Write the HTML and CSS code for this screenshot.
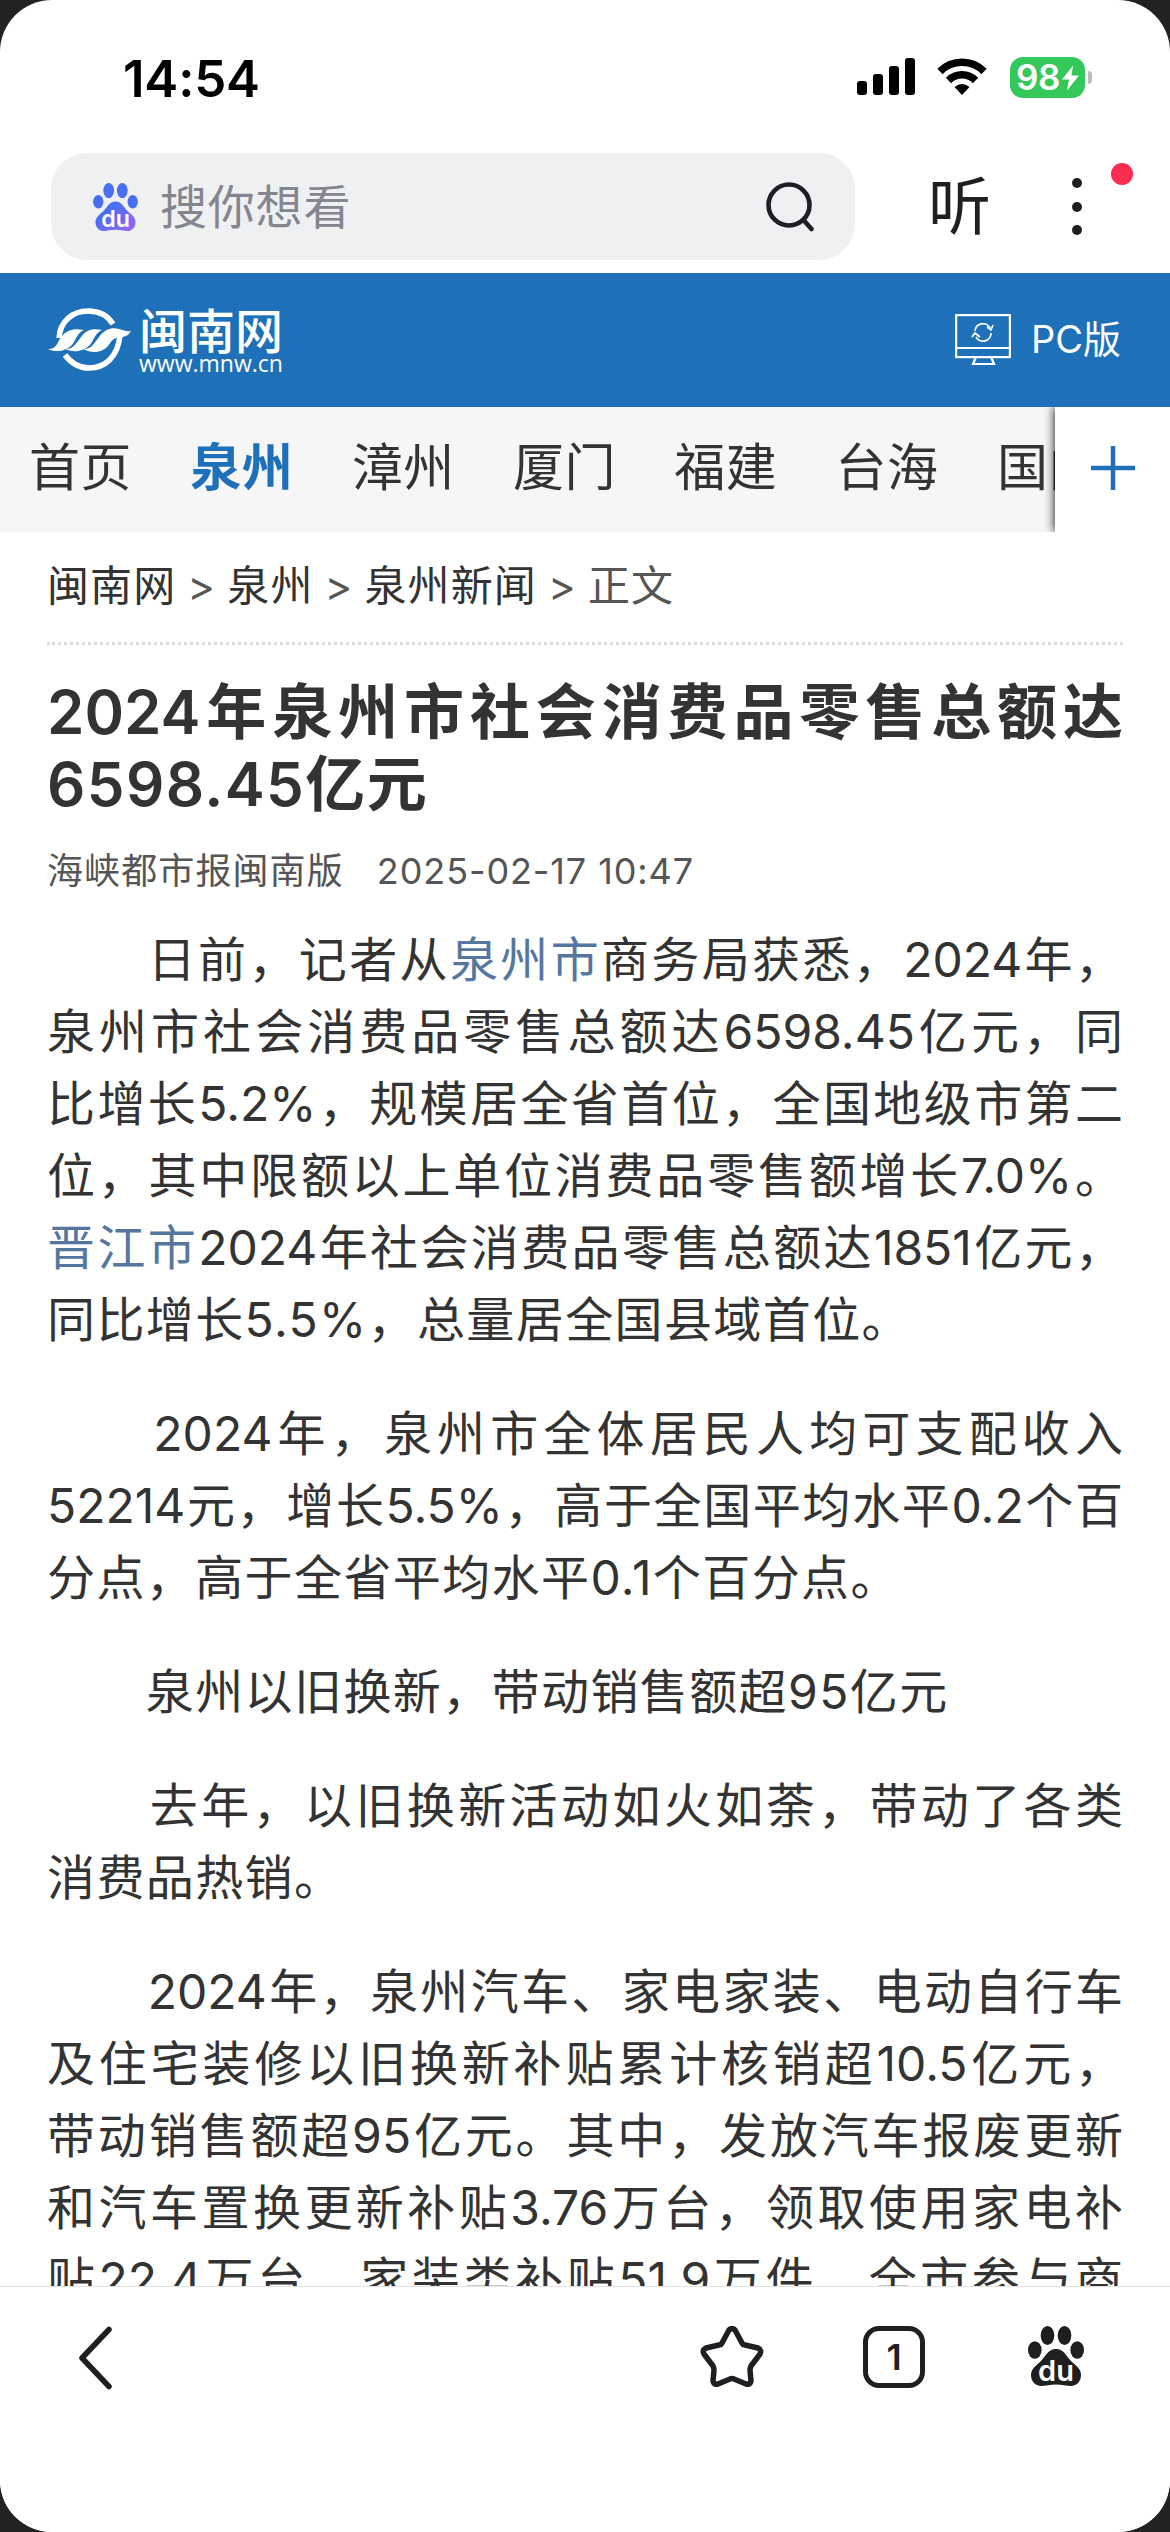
FILE: index.html
```html
<!DOCTYPE html>
<html lang="zh-CN">
<head>
  <meta charset="UTF-8" />
  <meta name="viewport" content="width=device-width, initial-scale=1.0"/>
  <title>2024年泉州市社会消费品零售总额达6598.45亿元</title>
  <link rel="stylesheet" href="styles.css">
</head>
<body>
  <div class="screen">
    <div class="statusBar">
      <span class="time">14:54</span>
      <div class="statusIcons">
        <svg width="58" height="43" viewBox="0 0 58 43">
          <rect x="0" y="23" width="10" height="14" rx="3"/>
          <rect x="16" y="16" width="10" height="21" rx="3"/>
          <rect x="32" y="8" width="10" height="29" rx="3"/>
          <rect x="48" y="0" width="10" height="37" rx="3"/>
        </svg>
        <svg class="wifi" width="50" height="43" viewBox="0 0 50 43">
          <path d="M3 13.5a31 31 0 0 1 44 0" fill="none" stroke="#000" stroke-width="7.5"/>
          <path d="M11.5 22.5a19 19 0 0 1 27 0" fill="none" stroke="#000" stroke-width="7.5"/>
          <path d="M25 37l-7.5-8q7.500-6 15 0z"/>
        </svg>
        <div class="battery">
          <span>98</span>
          <svg width="17" height="28" viewBox="0 0 17 25"><path d="M11 0L0 14h7L5 25 17 10H9.500z" fill="#fff"/></svg>
        </div>
        <i class="batteryTip"></i>
      </div>
    </div>

    <div class="searchRow">
      <div class="searchBox">
        <svg width="45" height="48" viewBox="0 0 56 60">
          <defs>
            <linearGradient id="pawBlue" x1="0" y1="0" x2="1" y2="1">
              <stop offset="0.3" stop-color="#4a6ef5"/>
              <stop offset="1" stop-color="#a066f5"/>
            </linearGradient>
          </defs>
          <g fill="#4a6ef2">
            <ellipse cx="6.500" cy="23.500" rx="6.500" ry="8.500"/>
            <ellipse cx="19.500" cy="9.500" rx="6.700" ry="9.500"/>
            <ellipse cx="36.500" cy="9.500" rx="6.700" ry="9.500"/>
            <ellipse cx="49.500" cy="23.500" rx="6.500" ry="8.500"/>
          </g>
          <path d="M28 23c8 0 10 7 16 13 6 5 9 8 9 13 0 7-5 11-10 11-5 0-9-1.500-15-1.500S18 60 13 60C8 60 3 56 3 49c0-5 3-8 9-13 6-6 8-13 16-13z" fill="url(#pawBlue)"/>
          <text class="du" x="28" y="54.500" text-anchor="middle">du</text>
        </svg>
        <span class="placeholder">搜你想看</span>
        <svg width="50" height="50" viewBox="0 0 50 50" fill="none" stroke="#1f1f23" stroke-width="4.600" stroke-linecap="round">
          <circle cx="24" cy="23" r="20.500"/>
          <path d="M38.500 38l8 9"/>
        </svg>
      </div>
      <span class="listen">听</span>
      <div class="more"><i></i><i></i><i></i><b></b></div>
    </div>

    <header class="siteHeader">
      <div class="logo">
        <svg width="84" height="64" viewBox="0 0 84 64" fill="none" stroke="#fff">
          <path d="M11 30C12 13 25 3 40 3c11 0 20 5 25 13" stroke-width="5.500"/>
          <path d="M17 47c6 8 13 13 24 13 16 0 29-11 31-33" stroke-width="5.500"/>
          <path d="M0 41c10 0 9-8 14-13 5-6 12-8 22-6-7 3-8 10-12 15-6 6-16 8-24 4z" fill="#fff" stroke="none"/>
          <path d="M16 40c8 3 11-3 17-11 5-7 11-9 21-7-7 3-8 10-12 15-6 6-17 9-26 3z" fill="#fff" stroke="none"/>
          <path d="M34 40c8 3 11-3 17-11 6-8 13-10 20-8 5 1 7 3 12 2-4 8-12 5-17 8-4 3-4 5-7 8-6 6-17 7-25 1z" fill="#fff" stroke="none"/>
        </svg>
        <div class="logoText">
          <strong>闽南网</strong>
          <span>www.mnw.cn</span>
        </div>
      </div>
      <div class="pcLink">
        <svg width="56" height="52" viewBox="0 0 56 52" fill="none" stroke="#fff" stroke-width="2.200">
          <rect x="1.100" y="1.100" width="53.800" height="42"/>
          <path d="M1 34h54M21 43l-3 7h21l-3-7"/>
          <path d="M20 17a8 8 0 0 1 15-3m1 5a8 8 0 0 1-15 4M32 13l4 3 2-5M17 23l3-4 5 4" stroke-width="1.700"/>
        </svg>
        <span>PC版</span>
      </div>
    </header>

    <nav class="channels">
      <div class="channelList">
        <a>首页</a>
        <a class="active">泉州</a>
        <a>漳州</a>
        <a>厦门</a>
        <a>福建</a>
        <a>台海</a>
        <a>国内</a>
      </div>
      <div class="addChannel">
        <svg width="46" height="46" viewBox="0 0 46 46" stroke="#1e71b8" stroke-width="4.500"><path d="M23 1v44M1 23h44"/></svg>
      </div>
    </nav>

    <main class="article">
      <div class="crumbs"><a>闽南网</a><i>&gt;</i><a>泉州</a><i>&gt;</i><a>泉州新闻</a><i>&gt;</i><span>正文</span></div>
      <h1><span class="line">2024年泉州市社会消费品零售总额达</span>6598.45亿元</h1>
      <div class="meta"><span>海峡都市报闽南版</span><time>2025-02-17 10:47</time></div>
      <p>
        <span class="line">　　日前，记者从<a>泉州市</a>商务局获悉，2024年，</span>
        <span class="line">泉州市社会消费品零售总额达6598.45亿元，同</span>
        <span class="line">比增长5.2%，规模居全省首位，全国地级市第二</span>
        <span class="line">位，其中限额以上单位消费品零售额增长7.0%。</span>
        <span class="line"><a>晋江市</a>2024年社会消费品零售总额达1851亿元，</span>
        同比增长5.5%，总量居全国县域首位。
      </p>
      <p>
        <span class="line">　　2024年，泉州市全体居民人均可支配收入</span>
        <span class="line">52214元，增长5.5%，高于全国平均水平0.2个百</span>
        分点，高于全省平均水平0.1个百分点。
      </p>
      <p>　　泉州以旧换新，带动销售额超95亿元</p>
      <p>
        <span class="line">　　去年，以旧换新活动如火如荼，带动了各类</span>
        消费品热销。
      </p>
      <p>
        <span class="line">　　2024年，泉州汽车、家电家装、电动自行车</span>
        <span class="line">及住宅装修以旧换新补贴累计核销超10.5亿元，</span>
        <span class="line">带动销售额超95亿元。其中，发放汽车报废更新</span>
        <span class="line">和汽车置换更新补贴3.76万台，领取使用家电补</span>
        <span class="line">贴22.4万台、家装类补贴51.9万件，全市参与商</span>
      </p>
    </main>

    <footer class="toolbar">
      <svg width="34" height="64" viewBox="0 0 34 64" fill="none" stroke="#1f1f23" stroke-width="5.500" stroke-linecap="round" stroke-linejoin="round">
        <path d="M31 3.500L4 32l27 28.500"/>
      </svg>
      <svg class="star" width="64" height="62" viewBox="0 0 64 62" fill="none" stroke="#1f1f23" stroke-width="5.500" stroke-linejoin="round">
        <path d="M29 4q3-3 6 0l7 13q1 2 3 2l13 3q4 2 2 6l-9 12q-1 2-1 4l1 11q-1 4-5 3l-12-5q-2-1-4 0l-12 5q-4 1-5-3l1-11q0-2-1-4L4 28q-2-4 2-6l13-3q2 0 3-2z"/>
      </svg>
      <div class="tabs">1</div>
      <svg width="56" height="60" viewBox="0 0 56 60">
        <g fill="#1f1f1f">
          <ellipse cx="6.800" cy="24" rx="6.800" ry="8.800"/>
          <ellipse cx="19.500" cy="9.500" rx="6.800" ry="9.500"/>
          <ellipse cx="36.500" cy="9.500" rx="6.800" ry="9.500"/>
          <ellipse cx="49.200" cy="24" rx="6.800" ry="8.800"/>
          <path d="M28 23c8 0 10 7 16 13 6 5 9 8 9 13 0 7-5 11-10 11-5 0-9-1.500-15-1.500S18 60 13 60C8 60 3 56 3 49c0-5 3-8 9-13 6-6 8-13 16-13z"/>
        </g>
        <text class="du" x="28" y="54.500" text-anchor="middle">du</text>
      </svg>
    </footer>
  </div>
</body>
</html>
```
FILE: styles.css
```css
* {
  margin: 0;
  padding: 0;
  box-sizing: border-box;
}

body {
  background: #222;
  font-family: Inter, "Noto Sans CJK SC", sans-serif;
  color: #333;
}

i {
  font-style: normal;
}

svg {
  display: block;
  flex-shrink: 0;
}

.screen {
  width: 1170px;
  height: 2532px;
  background: #fff;
  border-radius: 52px;
  overflow: hidden;
  display: flex;
  flex-direction: column;
}

.statusBar {
  height: 153px;
  padding: 57px 78px 0 123px;
  display: flex;
  justify-content: space-between;
  align-items: flex-start;
  flex-shrink: 0;
}

.time {
  font-size: 51px;
  font-weight: 600;
  line-height: 43px;
  color: #000;
  letter-spacing: -0.2px;
}

.statusIcons {
  display: flex;
  align-items: center;
  height: 41px;
}

.statusIcons > svg {
  margin-top: 4px;
}

.statusIcons .wifi {
  margin-left: 22px;
}

.battery {
  width: 75px;
  height: 41px;
  margin-left: 23px;
  border-radius: 13px;
  background: #34c759;
  color: #fff;
  font-size: 35px;
  font-weight: 600;
  line-height: 41px;
  display: flex;
  align-items: center;
  justify-content: center;
  gap: 2px;
  letter-spacing: -0.5px;
}

.batteryTip {
  width: 4px;
  height: 13px;
  margin-left: 3px;
  border-radius: 0 4px 4px 0;
  background: #bbb;
}

.searchRow {
  height: 120px;
  padding-left: 51px;
  display: flex;
  align-items: flex-start;
  flex-shrink: 0;
}

.searchBox {
  width: 804px;
  height: 107px;
  padding: 0 40px 0 42px;
  border-radius: 36px;
  background: #eff0f2;
  display: flex;
  align-items: center;
}

.placeholder {
  flex: 1;
  margin-left: 22px;
  font-size: 47px;
  line-height: 107px;
  color: #858590;
  letter-spacing: 0.8px;
}

.du {
  font-family: Inter, sans-serif;
  font-size: 29px;
  font-weight: 600;
  fill: #fff;
}

.listen {
  margin-left: 73px;
  font-size: 63px;
  line-height: 107px;
  color: #1f1f23;
}

.more {
  position: relative;
  height: 107px;
  margin-left: 81px;
  display: flex;
  flex-direction: column;
  justify-content: center;
  gap: 13.5px;
}

.more i {
  width: 10px;
  height: 10px;
  border-radius: 50%;
  background: #1f1f23;
}

.more b {
  position: absolute;
  left: 39px;
  top: 10px;
  width: 22px;
  height: 22px;
  border-radius: 50%;
  background: #fc2b50;
}

.siteHeader {
  height: 134px;
  padding: 0 49px 0 48px;
  background: #1e71b8;
  color: #fff;
  display: flex;
  align-items: center;
  justify-content: space-between;
  flex-shrink: 0;
}

.logo {
  display: flex;
  align-items: center;
}

.logoText {
  margin-left: 7px;
  padding-top: 1px;
  display: flex;
  flex-direction: column;
}

.logoText strong {
  font-size: 48px;
  font-weight: 500;
  line-height: 46px;
}

.logoText span {
  font-family: "Open Sans", sans-serif;
  font-size: 23px;
  line-height: 17px;
}

.pcLink {
  display: flex;
  align-items: center;
  gap: 20px;
  font-size: 38px;
}

.pcLink span {
  margin-bottom: 8px;
}

.channels {
  height: 125px;
  background: #f6f6f6;
  display: flex;
  flex-shrink: 0;
  overflow: hidden;
}

.channelList {
  width: 1055px;
  padding-left: 29px;
  display: flex;
  gap: 58.3px;
  overflow: hidden;
  white-space: nowrap;
  font-size: 51px;
  line-height: 121px;
}

.channelList a {
  letter-spacing: 0.5px;
}

.channelList .active {
  color: #1e71b8;
  font-weight: 700;
}

.addChannel {
  width: 115px;
  padding-bottom: 3px;
  background: #fff;
  box-shadow: 0 0 10px #000;
  clip-path: inset(0 0 0 -12px);
  display: flex;
  align-items: center;
  justify-content: center;
}

.article {
  flex: 1;
  min-height: 0;
  padding: 0 47px;
  overflow: hidden;
  text-spacing-trim: space-all;
}

.crumbs {
  height: 113px;
  border-bottom: 3px dotted #ddd;
  font-size: 42px;
  line-height: 108px;
  letter-spacing: 1.1px;
}

.crumbs i {
  display: inline-block;
  width: 51px;
  text-align: center;
  color: #555;
}

.crumbs span {
  color: #555;
}

h1 {
  margin-top: 31px;
  font-size: 60px;
  font-weight: 600;
  line-height: 72px;
  letter-spacing: 1.4px;
}

.meta {
  margin-top: 33px;
  display: flex;
  gap: 33px;
  font-size: 36px;
  line-height: 36px;
  color: #555;
  letter-spacing: 1.1px;
}

.meta time {
  letter-spacing: 0.9px;
}

.article p {
  margin-bottom: 42px;
  font-size: 48px;
  line-height: 72px;
  letter-spacing: 1.4px;
}

.article .line {
  display: block;
  text-align: justify;
  text-align-last: justify;
  white-space: nowrap;
  letter-spacing: 0;
}

.meta + p {
  margin-top: 35px;
}

.article p a {
  color: #55779f;
}

.toolbar {
  height: 246px;
  padding: 39px 85px 0 78px;
  border-top: 1px solid #e2e2e2;
  background: #fff;
  display: flex;
  align-items: flex-start;
  flex-shrink: 0;
}

.star {
  margin-left: 588px;
}

.tabs {
  width: 62px;
  height: 62px;
  margin: 0 103px 0 99px;
  border: 5px solid #1f1f23;
  border-radius: 16px;
  font-size: 36px;
  font-weight: 600;
  line-height: 52px;
  text-align: center;
  color: #1f1f23;
}
```
